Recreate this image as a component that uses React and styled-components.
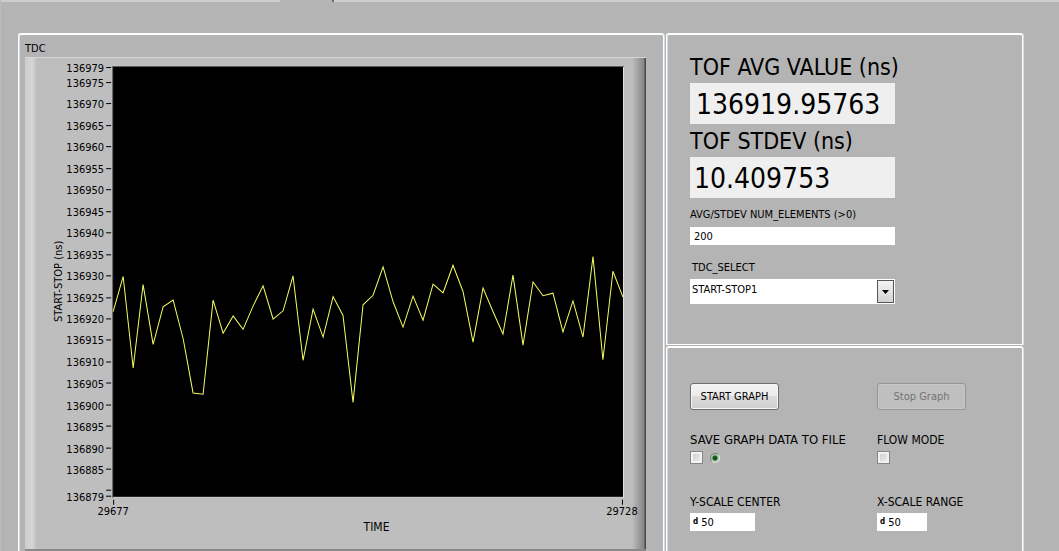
import React, { useState } from 'react';
import styled, { createGlobalStyle } from 'styled-components';

const BASE = 136000;
const Y_MIN = 879;
const PX_PER_NS = 4.293;

const samples = [
  921.8, 930, 908.7, 928.1, 914.2, 922.9, 924.5, 915.5, 902.9, 902.6, 924.5, 916.8, 920.8,
  917.7, 923.1, 927.8, 920.1, 922, 930.1, 910.5, 922.4, 915.9, 925.3, 920.9, 900.7, 923.4,
  925.6, 932.2, 924.1, 918.2, 925.4, 919.8, 928.2, 926.2, 932.6, 926.5, 914.7, 927.3, 921.8,
  916.6, 930.3, 914, 928.7, 925.5, 926.1, 917.1, 924.3, 915.9, 934.6, 910.6, 931.2, 925.2,
];

const plot = { left: 88, top: 9, width: 509, height: 429 };

const toX = (index) => plot.left + (index * plot.width) / (samples.length - 1);
const toY = (value) => 437 - (value - Y_MIN) * PX_PER_NS;

const yTicks = [975, 970, 965, 960, 955, 950, 945, 940, 935, 930, 925, 920, 915, 910, 905, 900, 895, 890, 885];

const TdcChart = () => {
  const points = samples.map((value, i) => `${toX(i).toFixed(1)},${toY(value).toFixed(1)}`).join(' ');
  const marks = [
    { label: BASE + 979, y: 10 },
    ...yTicks.map((value) => ({ label: BASE + value, y: Math.round(toY(value)) })),
    { label: '', y: 432 },
    { label: BASE + 879, y: 438 },
  ];

  return (
    <ChartSvg viewBox="0 0 620 490" role="img" aria-label="TDC">
      <rect x="87" y="8" width="511" height="431" fill="#5c5c5c" />
      <rect x="88" y="438" width="510" height="1" fill="#e6e6e6" />
      <rect x="597" y="9" width="1" height="430" fill="#e6e6e6" />
      <rect x={plot.left} y={plot.top} width={plot.width} height={plot.height} fill="#000" />
      <polyline points={points} fill="none" stroke="#f6ff60" strokeWidth="1" />
      {marks.map((mark) => (
        <g key={mark.y}>
          <rect x="81" y={mark.y - 1} width="5" height="1" fill="#000" />
          <AxisText x="79" y={mark.y + 4} textAnchor="end">{mark.label}</AxisText>
        </g>
      ))}
      <rect x="88" y="441" width="1" height="5" fill="#000" />
      <rect x="596" y="441" width="1" height="5" fill="#000" />
      <AxisText x="88" y="456" textAnchor="middle">29677</AxisText>
      <AxisText x="596" y="456" textAnchor="middle">29728</AxisText>
      <AxisTitle x="351" y="472" textAnchor="middle">TIME</AxisTitle>
      <AxisText transform="translate(37 223) rotate(-90)" textAnchor="middle">START-STOP (ns)</AxisText>
    </ChartSvg>
  );
};

const App = () => {
  const [numElements, setNumElements] = useState('200');
  const [tdc, setTdc] = useState('START-STOP1');
  const [save, setSave] = useState(false);
  const [flow, setFlow] = useState(false);
  const [yCenter, setYCenter] = useState('50');
  const [xRange, setXRange] = useState('50');

  return (
    <Page>
      <GlobalStyle />
      <TabEdge>
        <TabGap />
      </TabEdge>
      <Panels>
        <GraphPanel>
          <PanelTitle>TDC</PanelTitle>
          <ChartFrame>
            <TdcChart />
          </ChartFrame>
        </GraphPanel>
        <Side>
          <ReadoutPanel>
            <ReadoutLabel htmlFor="avg">TOF AVG VALUE (ns)</ReadoutLabel>
            <Readout id="avg" $indent={6}>136919.95763</Readout>
            <ReadoutLabel htmlFor="stdev" $spaced>TOF STDEV (ns)</ReadoutLabel>
            <Readout id="stdev" $indent={4}>10.409753</Readout>
            <FieldLabel htmlFor="elements">AVG/STDEV NUM_ELEMENTS (&gt;0)</FieldLabel>
            <TextInput id="elements" value={numElements} onChange={(e) => setNumElements(e.target.value)} />
            <FieldLabel htmlFor="tdc" $lower>TDC_SELECT</FieldLabel>
            <SelectBox>
              <Select id="tdc" value={tdc} onChange={(e) => setTdc(e.target.value)}>
                <option>START-STOP1</option>
                <option>START-STOP2</option>
              </Select>
              <SelectArrow>
                <svg width="7" height="4" viewBox="0 0 7 4">
                  <path d="M0 0H7L3.5 4Z" fill="#000" />
                </svg>
              </SelectArrow>
            </SelectBox>
          </ReadoutPanel>
          <ControlPanel>
            <div>
              <GraphButton type="button">START GRAPH</GraphButton>
            </div>
            <div>
              <GraphButton type="button" disabled>Stop Graph</GraphButton>
            </div>
            <Control>
              <ControlLabel htmlFor="save" $large>SAVE GRAPH DATA TO FILE</ControlLabel>
              <CheckRow>
                <Checkbox id="save" type="checkbox" checked={save} onChange={(e) => setSave(e.target.checked)} />
                <Led />
              </CheckRow>
            </Control>
            <Control>
              <ControlLabel htmlFor="flow">FLOW MODE</ControlLabel>
              <CheckRow>
                <Checkbox id="flow" type="checkbox" checked={flow} onChange={(e) => setFlow(e.target.checked)} />
              </CheckRow>
            </Control>
            <Control>
              <ControlLabel htmlFor="ycenter">Y-SCALE CENTER</ControlLabel>
              <NumberBox $width={65}>
                <Radix>d</Radix>
                <NumberInput id="ycenter" value={yCenter} onChange={(e) => setYCenter(e.target.value)} />
              </NumberBox>
            </Control>
            <Control>
              <ControlLabel htmlFor="xrange">X-SCALE RANGE</ControlLabel>
              <NumberBox $width={50}>
                <Radix>d</Radix>
                <NumberInput id="xrange" value={xRange} onChange={(e) => setXRange(e.target.value)} />
              </NumberBox>
            </Control>
          </ControlPanel>
        </Side>
      </Panels>
    </Page>
  );
};

const GlobalStyle = createGlobalStyle`
  * {
    box-sizing: border-box;
  }

  body {
    margin: 0;
    background: #b4b4b4;
    color: #000;
    font-family: 'DejaVu Sans Condensed', 'DejaVu Sans', sans-serif;
    font-size: 11px;
  }

  input, select, button {
    font: inherit;
    color: inherit;
  }
`;

const Page = styled.main`
  display: flex;
  flex-direction: column;
  min-height: 100vh;
  border-left: 1px solid #bcbcbc;
`;

const TabEdge = styled.div`
  height: 2px;
  padding-left: 279px;
  background: #cdcdcd;
`;

const TabGap = styled.div`
  width: 54px;
  height: 2px;
  background: #b4b4b4;
  border-right: 2px solid #6a6a6a;
`;

const Panels = styled.div`
  flex: 1;
  display: grid;
  grid-template-columns: minmax(0, 1fr) 357px;
  gap: 2px;
  padding: 31px 36px 0 17px;
`;

const Panel = styled.section`
  border: 2px solid #fbfdff;
  border-left-width: 1px;
  border-right-width: 1px;
  border-radius: 3px 3px 0 0;
  box-shadow: 1px 0 0 #d3dde4, inset 1px 0 0 #d3dde4;
`;

const GraphPanel = styled(Panel)`
  border-bottom: none;
  padding: 6px 17px 0 6px;
`;

const PanelTitle = styled.h2`
  margin: 0;
  font-size: 11px;
  font-weight: normal;
  line-height: 16px;
`;

const ChartFrame = styled.div`
  border-top: 1px solid #d6d6d6;
  border-bottom: 2px solid #8a8a8a;
  background:
    linear-gradient(to right, #cccccc, #d6d6d6 7px, #bebebe 12px, transparent 12px),
    linear-gradient(to left, #484848, #484848 1px, #858585 2px, #bebebe 14px);
`;

const ChartSvg = styled.svg`
  display: block;
  width: 100%;
`;

const AxisText = styled.text`
  font-size: 11px;
`;

const AxisTitle = styled.text`
  font-size: 12px;
`;

const Side = styled.div`
  display: flex;
  flex-direction: column;
  gap: 1px;
`;

const ReadoutPanel = styled(Panel)`
  display: flex;
  flex-direction: column;
  align-items: flex-start;
  padding: 19px 23px 40px;
  border-bottom-width: 1px;
`;

const ReadoutLabel = styled.label`
  margin: ${(props) => (props.$spaced ? 4 : 0)}px 0 3px;
  font-size: 23px;
  line-height: 26px;
`;

const Readout = styled.output`
  width: 205px;
  padding-top: 2px;
  padding-left: ${(props) => props.$indent}px;
  background: #efefef;
  font-size: 28px;
  line-height: 39px;
`;

const FieldLabel = styled.label`
  margin: ${(props) => (props.$lower ? '15px 0 3px 2px' : '9px 0 4px')};
  font-size: 11px;
  line-height: 16px;
`;

const TextInput = styled.input`
  width: 205px;
  height: 18px;
  padding: 0 4px;
  border: none;
  background: #fff;
`;

const SelectBox = styled.div`
  position: relative;
  width: 205px;
  height: 25px;
  background: #fff;
`;

const Select = styled.select`
  appearance: none;
  display: block;
  width: 100%;
  height: 21px;
  padding: 0 20px 0 2px;
  border: none;
  background: transparent;
`;

const SelectArrow = styled.span`
  position: absolute;
  top: 1px;
  right: 1px;
  display: flex;
  align-items: center;
  justify-content: center;
  width: 17px;
  height: 23px;
  border: 1px solid #555;
  background: linear-gradient(#f4f4f4, #d2d2d2);
  pointer-events: none;
`;

const ControlPanel = styled(Panel)`
  flex: 1;
  display: grid;
  grid-template-columns: 187px 1fr;
  align-content: start;
  row-gap: 22px;
  padding: 35px 23px 18px;
  border-bottom: none;
`;

const GraphButton = styled.button`
  height: 27px;
  min-width: 89px;
  padding: 0 8px;
  border: 1px solid #6e6e6e;
  border-radius: 3px;
  background: linear-gradient(#f3f3f3, #ececec 50%, #dcdcdc 50%, #cfcfcf);
  box-shadow: inset 0 0 0 1px #f6f6f6;

  &:disabled {
    border-color: #959595;
    background: #bfbfbf;
    box-shadow: inset 0 0 0 1px #c6c6c6;
    color: #747474;
  }
`;

const Control = styled.div`
  display: flex;
  flex-direction: column;
  align-items: flex-start;
  gap: 3px;
`;

const ControlLabel = styled.label`
  font-size: ${(props) => (props.$large ? 13 : 12)}px;
  line-height: 16px;
`;

const CheckRow = styled.div`
  display: flex;
  align-items: center;
  gap: 7px;
  height: 21px;
  padding-bottom: 8px;
`;

const Checkbox = styled.input`
  appearance: none;
  width: 13px;
  height: 13px;
  margin: 0;
  border: 1px solid #858585;
  background: linear-gradient(135deg, #c9c9c9, #f4f4f4);
  box-shadow: inset 0 0 0 2px #f2f2f2;

  &:checked {
    background: #333;
  }
`;

const Led = styled.span`
  width: 10px;
  height: 10px;
  border: 1px solid;
  border-color: #858585 #e8e8e8 #e8e8e8 #858585;
  border-radius: 50%;
  background: radial-gradient(circle, #0c4a10 0, #1c5a22 2px, #9cc49e 3px, #a9c9aa 4px);
`;

const NumberBox = styled.div`
  display: flex;
  align-items: center;
  gap: 3px;
  width: ${(props) => props.$width}px;
  height: 18px;
  padding-left: 3px;
  background: #fff;
`;

const Radix = styled.span`
  font-size: 8px;
  font-weight: bold;
  line-height: 16px;
`;

const NumberInput = styled.input`
  min-width: 0;
  flex: 1;
  padding: 0;
  border: none;
  background: transparent;
`;

export default App;
